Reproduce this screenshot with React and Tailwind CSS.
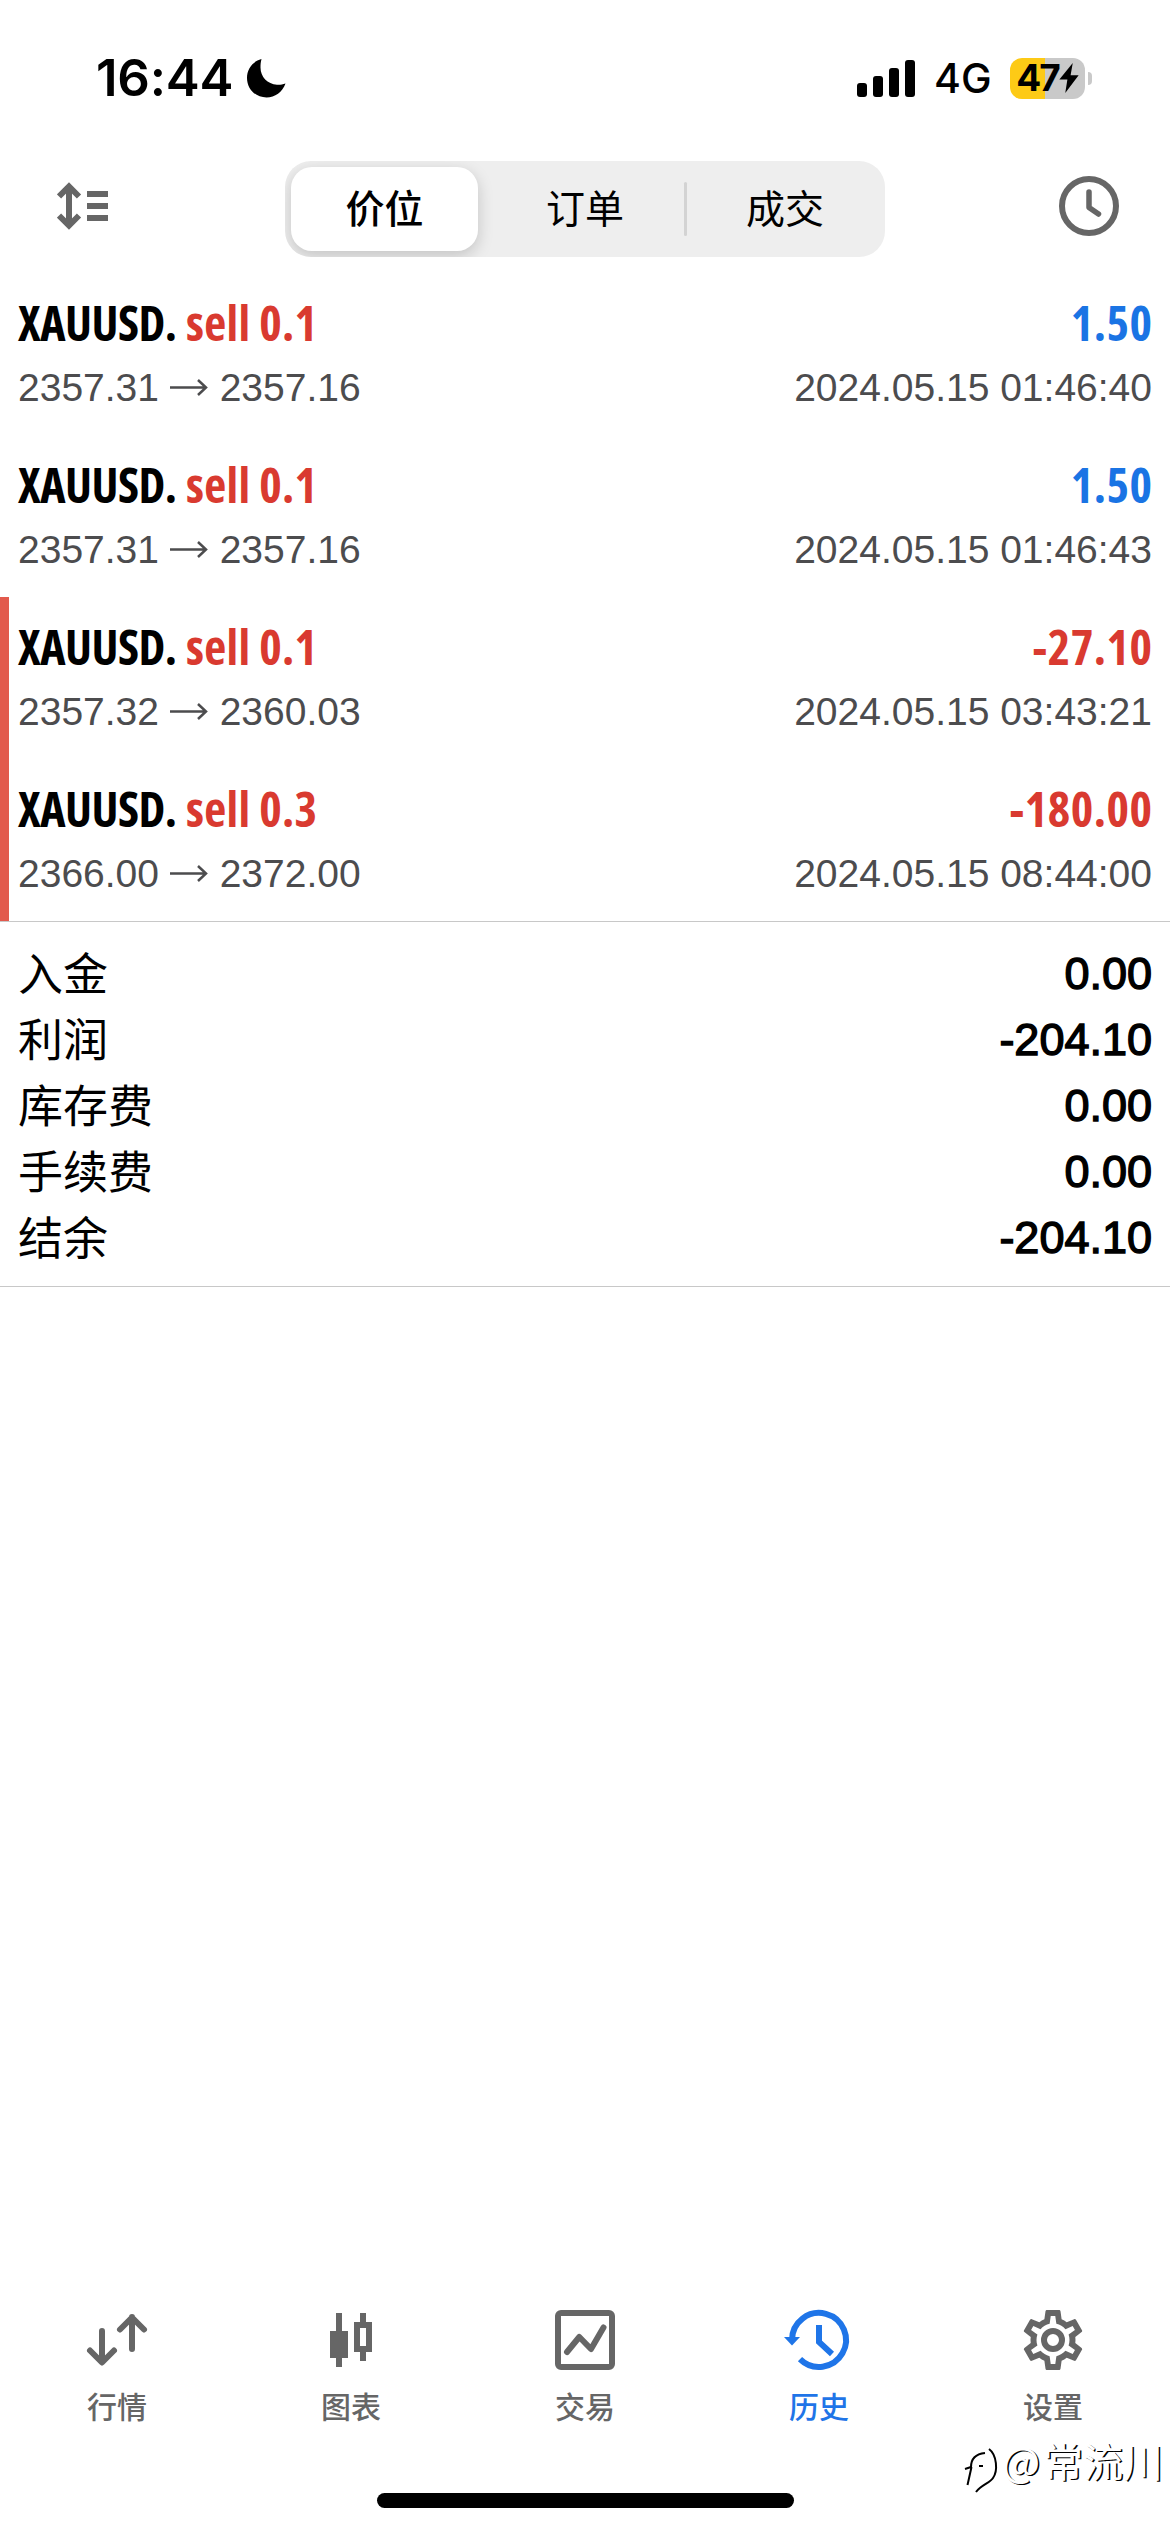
const deals = [
  { id: 1, symbol: 'XAUUSD.', side: 'sell 0.1', open: '2357.31', close: '2357.16', time: '2024.05.15 01:46:40', profit: '1.50' },
  { id: 2, symbol: 'XAUUSD.', side: 'sell 0.1', open: '2357.31', close: '2357.16', time: '2024.05.15 01:46:43', profit: '1.50' },
  { id: 3, symbol: 'XAUUSD.', side: 'sell 0.1', open: '2357.32', close: '2360.03', time: '2024.05.15 03:43:21', profit: '-27.10', stopped: true },
  { id: 4, symbol: 'XAUUSD.', side: 'sell 0.3', open: '2366.00', close: '2372.00', time: '2024.05.15 08:44:00', profit: '-180.00', stopped: true },
];

const summary = [
  { label: '入金', value: '0.00' },
  { label: '利润', value: '-204.10' },
  { label: '库存费', value: '0.00' },
  { label: '手续费', value: '0.00' },
  { label: '结余', value: '-204.10' },
];

const segments = ['价位', '订单', '成交'];

const QuotesIcon = () => (
  <svg className="size-[72px]" viewBox="0 0 72 72" fill="none" stroke="currentColor" strokeWidth="6" strokeLinecap="round" strokeLinejoin="round">
    <path d="M21 27v31M9 46.5l12 12 12-12M51 45V13M39 25.5l12-12 12 12" />
  </svg>
);

const ChartIcon = () => (
  <svg className="size-[72px]" viewBox="0 0 72 72" fill="currentColor">
    <path d="M21 9h6v18h6v27h-6v9h-6v-9h-6V27h6z" />
    <path fillRule="evenodd" d="M45 9h6v9h6v30h-6v9h-6v-9h-6V18h6zM45 24v18h6V24z" />
  </svg>
);

const TradeIcon = () => (
  <svg className="size-[72px]" viewBox="0 0 72 72" fill="none" stroke="currentColor" strokeWidth="6" strokeLinecap="round" strokeLinejoin="round">
    <rect x="9" y="9" width="54" height="54" rx="3" />
    <path d="M18 48l12.300-15L42 45l12.500-21.500" />
  </svg>
);

const HistoryIcon = () => (
  <svg className="size-[72px]" viewBox="0 0 72 72" fill="none" stroke="currentColor" strokeWidth="6">
    <path d="M9 36A27 27 0 1 1 17 55.1" />
    <path d="M36 21v17l13 12" />
    <path d="M1 33h16l-8 8.500z" fill="currentColor" stroke="none" />
  </svg>
);

const SettingsIcon = () => (
  <svg className="size-[72px]" viewBox="0 0 24 24" fill="currentColor">
    <path d="M12,8A4,4 0 0,1 16,12A4,4 0 0,1 12,16A4,4 0 0,1 8,12A4,4 0 0,1 12,8M12,10A2,2 0 0,0 10,12A2,2 0 0,0 12,14A2,2 0 0,0 14,12A2,2 0 0,0 12,10M10,22C9.75,22 9.54,21.82 9.5,21.58L9.13,18.93C8.5,18.68 7.96,18.34 7.44,17.94L4.95,18.95C4.73,19.03 4.46,18.95 4.34,18.73L2.34,15.27C2.21,15.05 2.27,14.78 2.46,14.63L4.57,12.97L4.5,12L4.57,11L2.46,9.37C2.27,9.22 2.21,8.95 2.34,8.73L4.34,5.27C4.46,5.05 4.73,4.96 4.95,5.05L7.44,6.05C7.96,5.66 8.5,5.32 9.13,5.07L9.5,2.42C9.54,2.18 9.75,2 10,2H14C14.25,2 14.46,2.18 14.5,2.42L14.87,5.07C15.5,5.32 16.04,5.66 16.56,6.05L19.05,5.05C19.27,4.96 19.54,5.05 19.66,5.27L21.66,8.73C21.79,8.95 21.73,9.22 21.54,9.37L19.43,11L19.5,12L19.43,13L21.54,14.63C21.73,14.78 21.79,15.05 21.66,15.27L19.66,18.73C19.54,18.95 19.27,19.04 19.05,18.95L16.56,17.95C16.04,18.34 15.5,18.68 14.87,18.93L14.5,21.58C14.46,21.82 14.25,22 14,22H10M11.25,4L10.88,6.61C9.68,6.86 8.62,7.5 7.85,8.39L5.44,7.35L4.69,8.65L6.8,10.2C6.4,11.37 6.4,12.64 6.8,13.8L4.68,15.36L5.43,16.66L7.86,15.62C8.63,16.5 9.68,17.14 10.87,17.38L11.24,20H12.76L13.13,17.39C14.32,17.14 15.37,16.5 16.14,15.62L18.57,16.66L19.32,15.36L17.2,13.81C17.6,12.64 17.6,11.37 17.2,10.2L19.31,8.65L18.56,7.35L16.15,8.39C15.38,7.5 14.32,6.86 13.12,6.62L12.75,4H11.25Z" />
  </svg>
);

const tabs = [
  { label: '行情', icon: QuotesIcon },
  { label: '图表', icon: ChartIcon },
  { label: '交易', icon: TradeIcon },
  { label: '历史', icon: HistoryIcon, active: true },
  { label: '设置', icon: SettingsIcon },
];

const StatusBar = () => (
  <div className="flex h-[140px] items-start justify-between pt-[57px] pr-[78px] pl-[96px] font-['Inter',sans-serif]">
    <div className="flex h-[42px] items-center">
      <span className="w-[150px] text-[51px] leading-[42px] font-semibold tracking-[-0.2px]">16:44</span>
      <svg className="h-[40px] w-[40px]" viewBox="0 0 40 40">
        <path d="M15.500 1C6.500 3.500 1 11 1 20c0 11 8.500 19.500 19.500 19.500 8.500 0 16-5.500 19-14-3.500 1.200-6 1.500-8.500 1.200C21.500 26 14.500 19 14.500 9.500c0-3 .2-5.500 1-8.500z" />
      </svg>
    </div>
    <div className="flex h-[42px] items-center">
      <svg className="h-[38px] w-[58px]" viewBox="0 0 58 38">
        <rect x="0" y="24" width="10" height="14" rx="3" />
        <rect x="16" y="17" width="10" height="21" rx="3" />
        <rect x="32" y="9" width="10" height="29" rx="3" />
        <rect x="48" y="1" width="10" height="37" rx="3" />
      </svg>
      <span className="ml-[19px] w-[76px] text-[41px] leading-[42px] font-medium">4G</span>
      <div className="flex h-[41px] w-[75px] items-center justify-center rounded-[12px] bg-linear-to-r from-[#fdca16] from-47% to-[#c9c9c9] to-47%">
        <span className="text-[37px] leading-[44px] font-bold tracking-[-2px]">47</span>
        <svg className="h-[30px] w-[20px]" viewBox="0 0 18 28">
          <path d="M12.500 0L0 15.500h7.500L5.500 28 18 11.500h-7.500z" />
        </svg>
      </div>
      <span className="ml-[3px] h-[13px] w-[4px] rounded-r-full bg-[#c9c9c9]" />
    </div>
  </div>
);

const Header = () => (
  <div className="flex h-[133px] items-start justify-between pt-[21px] pr-[51px] pl-[57px]">
    <svg className="mt-[21px] mr-[177px] h-[48px] w-[51px] text-[#666]" viewBox="0 0 51 48" fill="none" stroke="currentColor" strokeWidth="6">
      <path d="M12 5v38M2 14.500l10-10 10 10M2 33.500l10 10 10-10" />
      <path d="M30 12h21M30 24h21M30 36h21" />
    </svg>
    <div className="relative grid h-[96px] w-[600px] grid-cols-3 items-center overflow-hidden rounded-[26px] bg-[#eee] font-['Noto_Sans_CJK_SC',sans-serif] text-[39px]">
      <span className="absolute top-[21px] left-[399px] h-[54px] w-[3px] rounded-full bg-[#d3d3d3]" />
      {segments.map((name, i) => (
        <div
          key={name}
          className={
            i === 0
              ? 'ml-[6px] flex h-[84px] w-[187px] items-center justify-center rounded-[21px] bg-white pb-[5px] font-medium shadow-[0_5px_16px_rgba(0,0,0,0.18)]'
              : 'flex h-[84px] items-center justify-center pb-[5px]'
          }
        >
          {name}
        </div>
      ))}
    </div>
    <svg className="mt-[15px] ml-[174px] size-[60px] text-[#666]" viewBox="0 0 60 60" fill="none" stroke="currentColor" strokeWidth="6" strokeLinecap="round" strokeLinejoin="round">
      <circle cx="30" cy="30" r="27" />
      <path d="M30 16v15.500l9.500 6.500" strokeWidth="5.500" />
    </svg>
  </div>
);

const DealRow = ({ deal }) => {
  const negative = deal.profit.startsWith('-');
  return (
    <div
      className={`flex h-[162px] flex-col border-l-[9px] pt-[20px] pr-[18px] pl-[9px] ${
        deal.stopped ? 'border-[#e25a4d]' : 'border-transparent'
      }`}
    >
      <div className="flex h-[60px] items-center justify-between font-['Open_Sans',sans-serif] text-[48px] leading-[60px] font-bold font-stretch-75%">
        <div className="flex">
          <span className="w-[168px] tracking-[-0.5px] whitespace-nowrap">{deal.symbol}</span>
          <span className="tracking-[0.3px] whitespace-nowrap text-[#d93a30]">{deal.side}</span>
        </div>
        <span className={`-mr-[0.5px] tracking-[0.5px] ${negative ? 'text-[#d93a30]' : 'text-[#1a74e4]'}`}>{deal.profit}</span>
      </div>
      <div className="flex h-[70px] items-center justify-between font-['Liberation_Sans',sans-serif] text-[39px] text-[#4c4c4e]">
        <div className="flex items-center whitespace-pre">
          <span>{deal.open} </span>
          <svg className="h-[24px] w-[39px]" viewBox="0 0 39 24" fill="none" stroke="currentColor" strokeWidth="2.500">
            <path d="M0 11.500h35M28 4l8 7.500-8 7.500" />
          </svg>
          <span> {deal.close}</span>
        </div>
        <span>{deal.time}</span>
      </div>
    </div>
  );
};

const Summary = () => (
  <div className="border-y border-[#c8c8c8] px-[18px] pt-[19px] pb-[15px]">
    {summary.map((item) => (
      <div key={item.label} className="flex h-[66px] items-center justify-between text-[45px] leading-[66px]">
        <span className="pb-[4px] leading-[62px] font-['Noto_Sans_CJK_SC',sans-serif]">{item.label}</span>
        <span className="font-['Liberation_Sans',sans-serif] [-webkit-text-stroke:1.4px_black]">{item.value}</span>
      </div>
    ))}
  </div>
);

const TabBar = () => (
  <div className="grid h-[189px] grid-cols-5">
    {tabs.map(({ label, icon: Icon, active }) => (
      <div key={label} className={`flex flex-col items-center ${active ? 'text-[#1f75e8]' : 'text-[#666]'}`}>
        <Icon />
        <span className="mt-[7px] font-['Noto_Sans_CJK_SC',sans-serif] text-[30px] leading-[44px] font-medium">{label}</span>
      </div>
    ))}
  </div>
);

const Watermark = () => (
  <div className="absolute top-[2427px] right-[7px] flex items-center font-['Noto_Sans_CJK_SC',sans-serif] text-[40px] leading-[48px] text-white [text-shadow:1.5px_1px_0_#000]">
    <svg className="mt-[20px] h-[46px] w-[38px]" viewBox="0 0 38 46" fill="none" stroke="#000" strokeWidth="2">
      <path d="M1 22l6-2c0-8 5-13 14-14M7.500 20L3.500 38M15 19h4" />
      <path d="M25 2c8 6 9 22 4 29-3 5-12 7-17 14" />
    </svg>
    <span className="mr-[3px]">@</span>
    <span>常流川</span>
  </div>
);

const App = () => {
  return (
    <div className="relative flex h-[2532px] w-[1170px] flex-col overflow-hidden bg-white text-black">
      <StatusBar />
      <Header />
      <div>
        {deals.map((deal) => (
          <DealRow key={deal.id} deal={deal} />
        ))}
      </div>
      <Summary />
      <div className="flex-1" />
      <TabBar />
      <div className="mb-[24px] h-[15px] w-[417px] self-center rounded-full bg-black" />
      <Watermark />
    </div>
  );
};

export default App;
